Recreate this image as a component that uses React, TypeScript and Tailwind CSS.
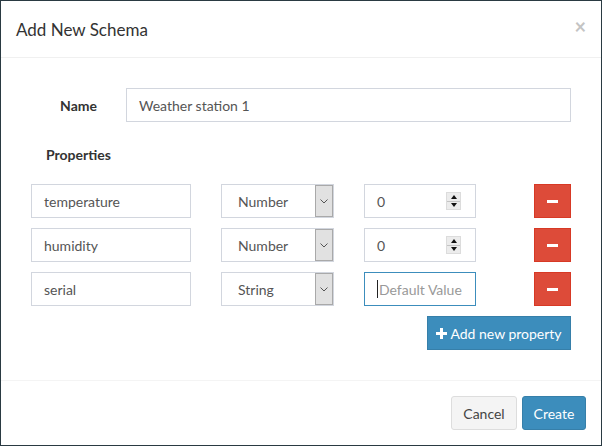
import React from 'react';

const font = {fontFamily: 'Lato, "Open Sans", sans-serif'};

const rows = [
  {name: 'temperature', type: 'Number', value: '0'},
  {name: 'humidity', type: 'Number', value: '0'},
  {name: 'serial', type: 'String', value: ''},
];

function Spinner() {
  return (
    <div className="flex flex-col w-[15px] h-[18px] bg-[#ececec] border border-[#dcdcdc]">
      <div className="flex-1 flex items-center justify-center border-b border-[#c4c4c4]">
        <svg width="6" height="4" viewBox="0 0 6 4">
          <path d="M0 4 L3 0 L6 4 Z" fill="#111" />
        </svg>
      </div>
      <div className="flex-1 flex items-center justify-center">
        <svg width="6" height="4" viewBox="0 0 6 4">
          <path d="M0 0 L3 4 L6 0 Z" fill="#111" />
        </svg>
      </div>
    </div>
  );
}

function SelectBox({value}: {value: string}) {
  return (
    <div className="ml-[30px] w-[113px] h-[34px] flex border border-[#d2d6de] bg-white">
      <div className="flex-1 flex items-center pl-[16px] text-[14px] text-[#555]">{value}</div>
      <div className="w-[18px] flex items-center justify-center bg-[#e1e1e1] border border-[#a9a9a9]">
        <svg width="8" height="5" viewBox="0 0 8 5">
          <path d="M0.5 0.5 L4 4 L7.5 0.5" stroke="#555" strokeWidth="1" fill="none" />
        </svg>
      </div>
    </div>
  );
}

function PropertyRow({row}: {row: (typeof rows)[number]}) {
  return (
    <div className="flex items-center h-[34px]">
      <div className="w-[160px] h-[34px] flex items-center pl-[12px] border border-[#d2d6de] text-[14px] text-[#555]">
        {row.name}
      </div>
      <SelectBox value={row.type} />
      {row.value ? (
        <div className="ml-[30px] w-[112px] h-[34px] flex items-center justify-between pl-[12px] pr-[14px] border border-[#d2d6de] text-[14px] text-[#555]">
          <span>{row.value}</span>
          <Spinner />
        </div>
      ) : (
        <div className="ml-[30px] w-[112px] h-[34px] flex items-center pl-[12px] border border-[#3c8dbc] text-[14px] text-[#999]">
          <span className="w-px h-[18px] bg-[#222] mr-px" />
          Default Value
        </div>
      )}
      <button className="ml-auto w-[37px] h-[34px] flex items-center justify-center bg-[#dd4b39] border border-[#d73925]">
        <span className="block w-[11px] h-[3px] bg-white" />
      </button>
    </div>
  );
}

export default function App() {
  return (
    <div className="w-[602px] h-[446px] bg-white border border-[#2a3a42] flex flex-col" style={font}>
      <div className="h-[57px] shrink-0 flex items-center justify-between pl-[15px] pr-[15px] border-b border-[#f0f0f0]">
        <h4 className="text-[17px] text-[#333] pt-[1px]">Add New Schema</h4>
        <span className="text-[20px] leading-none font-bold text-[#c4c4c4] -mt-[6px]">×</span>
      </div>
      <div className="pt-[30px] pb-[30px] pl-[30px] pr-[30px] border-b border-[#f4f4f4]">
        <div className="flex items-center h-[34px]">
          <label className="w-[80px] pr-[14px] text-right text-[14px] font-bold text-[#333]">Name</label>
          <div className="ml-[15px] flex-1 h-[34px] flex items-center pl-[12px] border border-[#d2d6de] text-[14px] text-[#555]">
            Weather station 1
          </div>
        </div>
        <div className="mt-[22px] h-[20px] ml-[15px] flex items-center text-[14px] font-bold text-[#333]">
          Properties
        </div>
        <div className="mt-[20px] flex flex-col gap-[10px]">
          {rows.map(r => (
            <PropertyRow key={r.name} row={r} />
          ))}
        </div>
        <div className="mt-[10px] flex justify-end">
          <button className="w-[144px] h-[34px] flex items-center justify-center gap-[3px] bg-[#3c8dbc] border border-[#367fa9] text-white text-[14px]">
            <svg width="11" height="11" viewBox="0 0 11 11">
              <path d="M4 0 H7 V4 H11 V7 H7 V11 H4 V7 H0 V4 H4 Z" fill="#fff" />
            </svg>
            Add new property
          </button>
        </div>
      </div>
      <div className="flex-1 flex justify-end items-center gap-[5px] pr-[15px]">
        <button className="w-[66px] h-[34px] rounded-[3px] bg-[#f4f4f4] border border-[#ddd] text-[14px] text-[#444]">
          Cancel
        </button>
        <button className="w-[64px] h-[34px] rounded-[3px] bg-[#3c8dbc] border border-[#367fa9] text-[14px] text-white">
          Create
        </button>
      </div>
    </div>
  );
}
